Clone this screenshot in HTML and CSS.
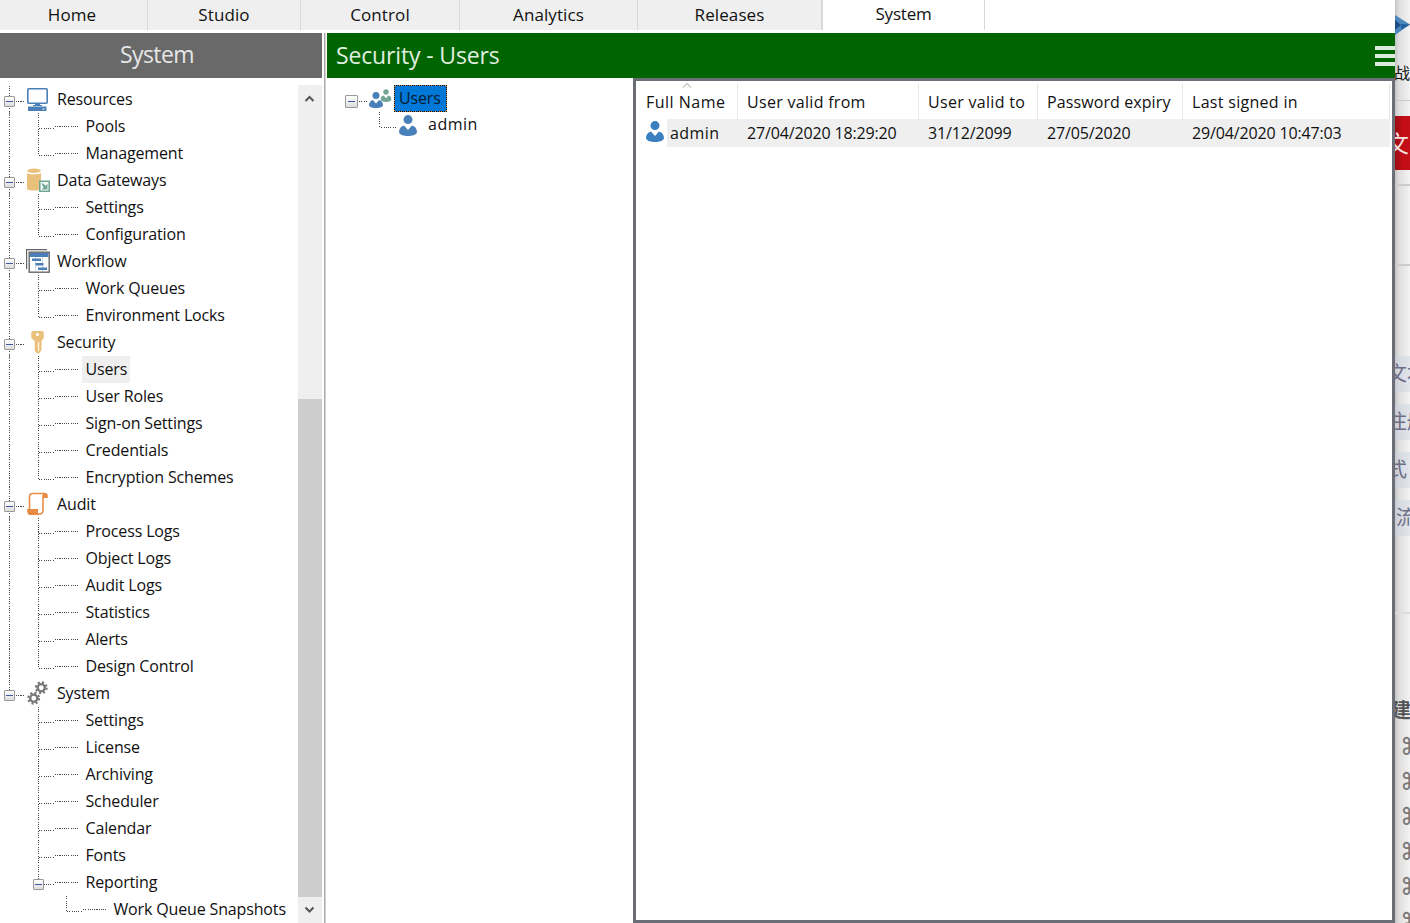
FILE: index.html
```html
<!DOCTYPE html>
<html lang="en">
<head>
    <meta charset="UTF-8">
    <title>Security - Users</title>
    <link rel="stylesheet" href="styles.css">
</head>
<body>
    <!-- shared icons -->
    <svg width="0" height="0" class="defs">
        <symbol id="person" viewBox="0 0 18 21">
            <circle cx="9" cy="4.6" r="4.5"/>
            <path d="M0 17.500c0-3.800 1.500-6 5-7L9 15l4-4.500c3.500 1 5 3.200 5 7C17 20 13 21 9 21s-8-1-9-3.500z"/>
        </symbol>
        <symbol id="gear" viewBox="-7 -7 14 14">
            <circle r="3.700" fill="none" stroke="#777" stroke-width="2.400"/>
            <circle r="5.600" fill="none" stroke="#777" stroke-width="2.200" stroke-dasharray="2.200 2.198"/>
        </symbol>
    </svg>

    <div class="window">
        <nav class="tabs">
            <a class="tab home">Home</a>
            <a class="tab studio">Studio</a>
            <a class="tab control">Control</a>
            <a class="tab analytics">Analytics</a>
            <a class="tab releases">Releases</a>
            <a class="tab system active">System</a>
        </nav>

        <div class="content">
            <aside class="sidebar">
                <h2>System</h2>
                <div class="sidebar-body">
                    <ul class="tree">
                        <li class="group">
                            <div class="node">
                                <i class="expander"></i><i class="dots"></i>
                                <svg class="icon" viewBox="0 0 24 24"><rect x="1.800" y="1.800" width="19.400" height="14.400" rx="1" fill="#fff" stroke="#4a7fb8" stroke-width="1.600"/><path d="M9 16h5v2h2v1H7v-1h2zM2 19.500h18.500V24H2z" fill="#4a7fb8"/><path d="M16.500 22h2" stroke="#fff"/></svg>
                                <span>Resources</span>
                            </div>
                            <ul>
                                <li><span>Pools</span></li>
                                <li><span>Management</span></li>
                            </ul>
                        </li>
                        <li class="group">
                            <div class="node">
                                <i class="expander"></i><i class="dots"></i>
                                <svg class="icon" viewBox="0 0 24 24"><path d="M1 5c2 1.700 12 1.700 14 0V21c-2 2-12 2-14 0z" fill="#e9c07c"/><ellipse cx="8" cy="2.800" rx="6.800" ry="2.200" fill="#e9c07c"/><rect x="13.800" y="13.300" width="9.400" height="10" fill="#fff" stroke="#71a696" stroke-width="1.600"/><path d="M15.500 15.500l2 0 2 2.300 2-2.300v6h-6l2-2z" fill="#71a696"/></svg>
                                <span>Data Gateways</span>
                            </div>
                            <ul>
                                <li><span>Settings</span></li>
                                <li><span>Configuration</span></li>
                            </ul>
                        </li>
                        <li class="group">
                            <div class="node">
                                <i class="expander"></i><i class="dots"></i>
                                <svg class="icon" viewBox="0 0 24 24"><path d="M.600 20V.600H21" fill="none" stroke="#666" stroke-width="1.200"/><rect x="3.200" y="3.200" width="20" height="20" fill="#fff" stroke="#666" stroke-width="1.400"/><path d="M4 4h18.500v4H4zM6 9.500h9V12H6zM9.500 14h8v2.500h-8zM12 18.500h9V21h-9z" fill="#4a7fb8"/><path d="M9.500 8v15M16.500 8v15" stroke="#4a7fb8" stroke-opacity=".4" stroke-width=".7"/></svg>
                                <span>Workflow</span>
                            </div>
                            <ul>
                                <li><span>Work Queues</span></li>
                                <li><span>Environment Locks</span></li>
                            </ul>
                        </li>
                        <li class="group">
                            <div class="node">
                                <i class="expander"></i><i class="dots"></i>
                                <svg class="icon" viewBox="0 0 24 24"><path d="M6.500 1h10l1.300 1.500V8l-2.300 3v9l-2.500 3.500h-1.500L8.700 21V11L5.300 8V2.500z" fill="#e9c07c"/><circle cx="11.500" cy="4.500" r="1.500" fill="#fff"/><path d="M12.600 12v9" stroke="#fff"/></svg>
                                <span>Security</span>
                            </div>
                            <ul>
                                <li><span class="selected">Users</span></li>
                                <li><span>User Roles</span></li>
                                <li><span>Sign-on Settings</span></li>
                                <li><span>Credentials</span></li>
                                <li><span>Encryption Schemes</span></li>
                            </ul>
                        </li>
                        <li class="group">
                            <div class="node">
                                <i class="expander"></i><i class="dots"></i>
                                <svg class="icon" viewBox="0 0 24 24"><path d="M3.500 18V5c0-2.500 1-3.500 3-3.500h12.500c-1.500.5-2 1.500-2 3.500v13c0 3-1 4-3.500 4H4" fill="#fff" stroke="#e88b45" stroke-width="1.600"/><path d="M17 1h3c1.500.5 2 2 1.800 5H17zM1 17h11v3c0 1.500.500 2.500 2 3H4c-2 0-3-2-3-6z" fill="#e88b45"/></svg>
                                <span>Audit</span>
                            </div>
                            <ul>
                                <li><span>Process Logs</span></li>
                                <li><span>Object Logs</span></li>
                                <li><span>Audit Logs</span></li>
                                <li><span>Statistics</span></li>
                                <li><span>Alerts</span></li>
                                <li><span>Design Control</span></li>
                            </ul>
                        </li>
                        <li class="group">
                            <div class="node">
                                <i class="expander"></i><i class="dots"></i>
                                <svg class="icon" viewBox="0 0 24 24"><use href="#gear" x="8.500" y="0" width="13.500" height="13.500"/><use href="#gear" x="1" y="10.500" width="13.500" height="13.500"/></svg>
                                <span>System</span>
                            </div>
                            <ul>
                                <li><span>Settings</span></li>
                                <li><span>License</span></li>
                                <li><span>Archiving</span></li>
                                <li><span>Scheduler</span></li>
                                <li><span>Calendar</span></li>
                                <li><span>Fonts</span></li>
                                <li class="parent"><i class="expander"></i><span>Reporting</span></li>
                            </ul>
                            <ul class="deep">
                                <li><span>Work Queue Snapshots</span></li>
                            </ul>
                        </li>
                    </ul>
                    <div class="scrollbar">
                        <svg viewBox="0 0 24 26"><path d="M7.500 16l4-4 4 4" fill="none" stroke="#555" stroke-width="2"/></svg>
                        <div class="thumb"></div>
                        <svg viewBox="0 0 24 26"><path d="M7.500 10.500l4 4 4-4" fill="none" stroke="#555" stroke-width="2"/></svg>
                    </div>
                </div>
            </aside>

            <main>
                <header>
                    <h1>Security - Users</h1>
                    <div class="menu"><i></i><i></i><i></i></div>
                </header>
                <div class="panels">
                    <div class="user-tree">
                        <div class="user-root">
                            <i class="expander"></i><i class="dots"></i>
                            <svg class="users-icon" viewBox="0 0 23 23"><use href="#person" x="11.500" y="0" width="11" height="17" fill="#71a696"/><use href="#person" x="0" y="4" width="14" height="18" fill="#fff" stroke="#fff"/><use href="#person" x="0" y="4.500" width="14" height="17" fill="#4a80b9"/></svg>
                            <span class="highlight">Users</span>
                        </div>
                        <div class="user-child">
                            <svg class="person"><use href="#person"/></svg>
                            <span>admin</span>
                        </div>
                    </div>
                    <div class="user-list">
                        <div class="row head">
                            <span>Full Name<svg class="sort" viewBox="0 0 10 5"><path d="M1 4.500l4-4 4 4" fill="none" stroke="#999"/></svg></span>
                            <span>User valid from</span>
                            <span>User valid to</span>
                            <span>Password expiry</span>
                            <span>Last signed in</span>
                        </div>
                        <div class="row data">
                            <span><svg class="person"><use href="#person"/></svg><b>admin</b></span>
                            <span>27/04/2020 18:29:20</span>
                            <span>31/12/2099</span>
                            <span>27/05/2020</span>
                            <span>29/04/2020 10:47:03</span>
                        </div>
                    </div>
                </div>
            </main>
        </div>
    </div>

    <!-- page showing behind the window -->
    <div class="behind">
        <div class="logo"><svg viewBox="0 0 15 20"><path d="M0 0l15 9.500L0 20z" fill="#4b86bd"/><path d="M0 5l6 5-6 5z" fill="#1d4d80"/><path d="M6 9l9 .5-9 5z" fill="#1f5f9d"/></svg></div>
        <div class="word">战</div>
        <div class="banner">文</div>
        <div class="bar"></div>
        <div class="gap"></div>
        <div class="tags">
            <p>文本</p>
            <p>注册</p>
            <p>式</p>
            <p class="flow">流</p>
        </div>
        <div class="title">建</div>
        <div class="keys"><p>⌘</p><p>⌘</p><p>⌘</p><p>⌘</p><p>⌘</p><p>⌘</p></div>
    </div>
</body>
</html>
```
FILE: styles.css
```css
* {
    box-sizing: border-box;
}
body {
    margin: 0;
    height: 923px;
    display: flex;
    overflow: hidden;
    font-family: "Open Sans", "Noto Sans CJK SC", sans-serif;
    font-size: 16px;
    letter-spacing: -0.15px;
    color: #111;
    background: #fff;
    white-space: nowrap;
}
ul, p, h1, h2 {
    margin: 0;
    padding: 0;
    list-style: none;
    font-weight: normal;
}
svg {
    display: block;
    flex: none;
}
.defs {
    position: absolute;
}
.window {
    width: 1395px;
    flex: none;
    display: flex;
    flex-direction: column;
}

/* Tabs */
.tabs {
    display: flex;
    height: 30px;
    margin-bottom: 3px;
}
.tab {
    background: #efefef;
    border-right: 1px solid #d9d9d9;
    text-align: center;
    font-size: 17px;
    letter-spacing: 0.1px;
    line-height: 29px;
}
.home { width: 148px; padding-right: 3px; }
.studio { width: 153px; padding-right: 0; }
.control { width: 159px; }
.analytics { width: 178px; }
.releases { width: 185px; border-right-width: 2px; }
.system { width: 162px; letter-spacing: -0.2px; }
.tab.active {
    background: #fff;
    line-height: 27px;
}

.content {
    display: flex;
    flex: 1;
    min-height: 0;
}

/* Sidebar */
.sidebar {
    width: 327px;
    border-right: 1px solid #fff;
    background: linear-gradient(#a8a8a8, #a8a8a8) 324px 0 / 1.5px 100% no-repeat;
}
.sidebar h2 {
    width: 322px;
    height: 45px;
    padding-right: 8px;
    background: #696969;
    color: #e6e6e6;
    font-size: 23px;
    letter-spacing: -0.6px;
    line-height: 43px;
    text-align: center;
}
.sidebar-body {
    display: flex;
    height: 845px;
    padding-top: 7px;
}
.tree {
    width: 298px;
    padding-top: 1px;
    overflow: hidden;
}
.group {
    background:
        linear-gradient(#777, #777) 9px 26px / 1px 4px no-repeat,
        repeating-linear-gradient(#444 0 1px, #fff 1px 2.25px) 9px 0 / 1px 100% no-repeat;
}
.group:last-child {
    background: repeating-linear-gradient(#444 0 1px, #fff 1px 2.25px) 9px 0 / 1px 12px no-repeat;
}
.node {
    height: 27px;
    display: flex;
    align-items: center;
    padding-left: 4px;
}
.node span {
    margin-top: -2px;
}
.expander {
    width: 11px;
    height: 11px;
    margin-top: 3px;
    border: 1px solid #999;
    border-radius: 1px;
    background: linear-gradient(#4056a8, #4056a8) center / 7px 1px no-repeat, linear-gradient(#fff, #ddd);
}
.dots {
    width: 9px;
    height: 1px;
    margin: 3px 1px 0 1px;
    background: repeating-linear-gradient(90deg, #444 0 1px, #fff 1px 2.25px);
}
.icon {
    width: 24px;
    height: 24px;
    margin: -1px 7px 0 0;
}
.group li {
    height: 27px;
    display: flex;
    align-items: center;
    padding-left: 38px;
}
.group li::before {
    content: "";
    width: 40px;
    height: 27px;
    margin-right: 4px;
    background:
        repeating-linear-gradient(#444 0 1px, #fff 1px 2.25px) 0 0 / 1px 100% no-repeat,
        repeating-linear-gradient(90deg, #444 0 1px, #fff 1px 2.25px) 1px 15px / 16px 1px no-repeat,
        repeating-linear-gradient(90deg, #444 0 1px, #fff 1px 2.25px) 17px 13px / 23px 1px no-repeat;
}
.group li:last-child::before {
    background-size: 1px 16px, 16px 1px, 23px 1px;
}
.group li span {
    line-height: 27px;
    padding: 0 3px 0 3.5px;
}
.selected {
    background: #efefef;
}
.group .parent .expander {
    order: -1;
    margin-left: -5px;
    margin-right: -6px;
    z-index: 1;
}
.group .deep li {
    padding-left: 66px;
}
.scrollbar {
    width: 24px;
    background: #efefef;
    display: flex;
    flex-direction: column;
}
.scrollbar svg {
    height: 26px;
}
.thumb {
    flex: 1;
    margin-top: 288px;
    background: #cdcdcd;
}

/* Main area */
main {
    flex: 1;
    display: flex;
    flex-direction: column;
}
main header {
    height: 45px;
    background: #006400;
    display: flex;
    justify-content: space-between;
    align-items: center;
    padding-left: 9px;
}
h1 {
    color: #e0efe0;
    font-size: 23px;
    line-height: 44px;
    margin-top: -2px;
}
.menu i {
    display: block;
    width: 20px;
    height: 4px;
    margin: 4px 0;
    background: #dcebdc;
}
.panels {
    flex: 1;
    display: flex;
}
.user-tree {
    width: 306px;
    padding: 7px 0 0 18px;
}
.user-root {
    height: 27px;
    display: flex;
    align-items: center;
}
.user-root .expander {
    width: 13px;
    height: 13px;
    margin-top: 5px;
}
.user-root .dots {
    margin-top: 5px;
}
.users-icon {
    width: 23px;
    height: 23px;
}
.highlight {
    margin-left: 2px;
    height: 27px;
    line-height: 24px;
    padding: 0 5px 0 4px;
    color: #061a30;
    background: #0078d7;
    border: 1px dashed #e08a3c;
    outline: 1px dotted #111;
    outline-offset: -1px;
}
.user-child {
    display: flex;
    align-items: center;
    height: 27px;
    margin-left: 34px;
}
.user-child::before {
    content: "";
    width: 17px;
    height: 27px;
    margin-right: 3px;
    background:
        repeating-linear-gradient(#444 0 1px, #fff 1px 2.25px) 0 0 / 1px 16px no-repeat,
        repeating-linear-gradient(90deg, #444 0 1px, #fff 1px 2.25px) 0 15px / 17px 1px no-repeat;
}
.user-child span {
    margin-top: -4px;
    letter-spacing: 0.5px;
}
.person {
    width: 18px;
    height: 21px;
    fill: #4a80b9;
}
.user-child .person {
    margin: 0 11px 0 0;
}

/* User list */
.user-list {
    flex: 1;
    border: 3px solid #6c6e77;
    padding-top: 2px;
    background: #fff;
}
.row {
    display: grid;
    grid-template-columns: 102px 181px 119px 145px 1fr;
    margin-right: 2px;
}
.head {
    height: 36px;
    line-height: 38px;
    letter-spacing: 0.3px;
}
.head span {
    position: relative;
    padding-left: 9px;
    border-right: 1px solid #e8e8e8;
}
.head span:first-child {
    padding-left: 10px;
    letter-spacing: 0.5px;
}
.head span:nth-child(4) {
    letter-spacing: 0.1px;
}
.sort {
    position: absolute;
    left: 46px;
    top: 0;
    width: 10px;
    height: 5px;
}
.data {
    height: 28px;
    line-height: 28px;
    background: linear-gradient(#efefef, #efefef) 31px 0 / 100% 100% no-repeat;
}
.data span {
    padding-left: 9px;
}
.data span:first-child {
    display: flex;
    align-items: center;
    padding-left: 10px;
}
.data .person {
    fill: #3a80c0;
    margin: -3px 6px 0 0;
}
.data b {
    font-weight: normal;
    letter-spacing: 0.4px;
}

/* Strip behind */
.behind {
    width: 15px;
    height: 923px;
    overflow: hidden;
    background: linear-gradient(90deg, #c4c4c4, #dedede 4px, #f3f3f3);
}
.logo {
    height: 65px;
    padding-top: 15px;
}
.logo svg {
    width: 15px;
    height: 20px;
}
.word {
    height: 36px;
    font-size: 16px;
    line-height: 17px;
    text-indent: -1px;
    border-bottom: 1px solid #c8c8cc;
}
.banner {
    height: 54px;
    margin-top: 15px;
    color: #f3e0e0;
    background: linear-gradient(90deg, #990c13, #c30d17 8px);
    font-size: 23px;
    line-height: 54px;
    text-indent: -9px;
}
.bar {
    height: 16px;
    border-bottom: 2px solid #ccc;
}
.gap {
    height: 80px;
    border-bottom: 2px solid #ccc;
}
.tags {
    margin-top: 90px;
    height: 258px;
    border-bottom: 2px solid #ddd;
}
.tags p {
    height: 36px;
    margin-bottom: 12px;
    background: rgba(200, 210, 225, 0.4);
    color: #6e6e85;
    font-size: 20px;
    line-height: 35px;
    text-indent: -8px;
}
.tags .flow {
    text-indent: 1px;
}
.title {
    height: 116px;
    padding-top: 80px;
    font-size: 20px;
    font-weight: bold;
    line-height: 34px;
    color: #555;
    text-indent: -4px;
}
.keys p {
    height: 35px;
    line-height: 35px;
    font-family: "DejaVu Sans", sans-serif;
    font-size: 24px;
    color: #777;
    text-indent: 5px;
}
```
